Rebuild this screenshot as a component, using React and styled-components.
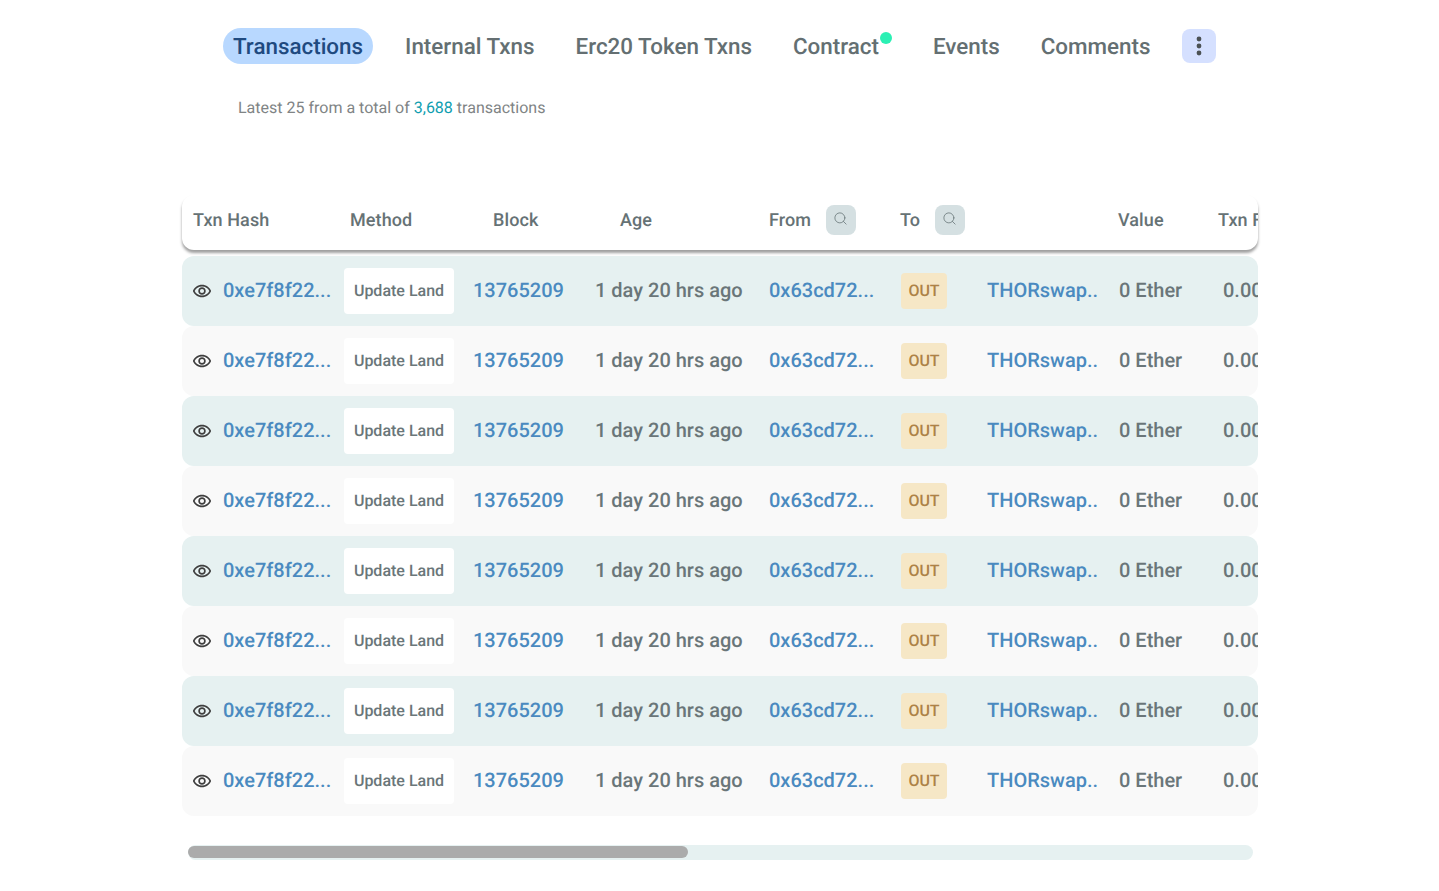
import React from 'react';
import styled, { createGlobalStyle } from 'styled-components';
import { MdOutlineRemoveRedEye } from 'react-icons/md';
import { Search } from 'lucide-react';

const GlobalStyle = createGlobalStyle`
  html, body { margin: 0; padding: 0; background: #fff; }
  body {
    font-family: Roboto, "Liberation Sans", sans-serif;
    text-rendering: geometricPrecision;
  }
`;

const Page = styled.div`
  width: 1439px;
  height: 891px;
  box-sizing: border-box;
  padding: 28px 181px 0 182px;
  overflow: hidden;
`;

const Tabs = styled.nav`
  display: flex;
  align-items: center;
  padding-left: 41px;
  height: 36px;
`;

const Tab = styled.div`
  position: relative;
  height: 36px;
  line-height: 38px;
  padding: 0 10px;
  margin-right: ${p => p.$gap}px;
  border-radius: 18px;
  font-size: 22.4px;
  font-weight: 500;
  white-space: nowrap;
  color: ${p => (p.$active ? '#1f4a80' : '#646f72')};
  background: ${p => (p.$active ? '#b8d8ff' : 'transparent')};
`;

const GreenDot = styled.span`
  position: absolute;
  top: 4px;
  right: -3px;
  width: 12px;
  height: 12px;
  border-radius: 50%;
  background: #2bf0b4;
`;

const MoreButton = styled.div`
  width: 34px;
  height: 34px;
  border-radius: 8px;
  background: #d5e0ff;
  display: flex;
  align-items: center;
  justify-content: center;
`;

const Summary = styled.p`
  margin: 0;
  padding: 34px 0 0 56px;
  height: 93px;
  box-sizing: border-box;
  font-size: 16px;
  line-height: 19px;
  color: #808485;
`;

const Count = styled.span`
  color: #0f9eb0;
`;

const HeaderBar = styled.div`
  width: 1076px;
  height: 55px;
  box-sizing: border-box;
  padding-bottom: 6px;
  margin-top: 38px;
  border-radius: 12px;
  background: #fff;
  box-shadow: 0 3px 3px rgba(0, 0, 0, 0.38);
  display: grid;
  grid-template-columns: 168px 143px 127px 149px 131px 218px 100px 100px;
  align-items: center;
  overflow: hidden;
  white-space: nowrap;
`;

const HeaderCell = styled.div`
  display: flex;
  align-items: center;
  padding-left: ${p => p.$indent || 0}px;
  gap: ${p => p.$gap || 0}px;
`;

const HeaderLabel = styled.span`
  margin-top: 2px;
  font-size: 18px;
  font-weight: 500;
  letter-spacing: 0.1px;
  color: #667275;
`;

const SearchButton = styled.div`
  width: 30px;
  height: 30px;
  box-sizing: border-box;
  padding: 0 2px 2px 0;
  border-radius: 8px;
  background: #d5e0e2;
  color: #6a777a;
  display: flex;
  align-items: center;
  justify-content: center;
`;

const Rows = styled.div`
  margin-top: 6px;
  width: 1076px;
`;

const Row = styled.div`
  height: 70px;
  border-radius: 12px;
  background: ${p => (p.$tinted ? '#e6f1f1' : '#f9f9f9')};
  display: grid;
  grid-template-columns: 162px 129px 122px 174px 132px 86px 132px 104px 100px;
  align-items: center;
  overflow: hidden;
  white-space: nowrap;
  font-size: 20px;
  font-weight: 500;
  color: #6a7679;
`;

const HashCell = styled.div`
  display: flex;
  align-items: center;
  gap: 11px;
  padding-left: 10px;
  color: #3f3f3f;
`;

const CellText = styled.span`
  margin-bottom: 2px;
`;

const BlueText = styled.span`
  margin-bottom: 2px;
  color: #4a8ac0;
`;

const MethodBadge = styled.div`
  width: 110px;
  height: 46px;
  border-radius: 4px;
  background: #fff;
  font-size: 16px;
  font-weight: 500;
  line-height: 46px;
  text-align: center;
  color: #6a7679;
`;

const OutBadge = styled.div`
  width: 46px;
  height: 36px;
  border-radius: 4px;
  background: #f6e7c6;
  color: #ad8247;
  font-size: 16px;
  font-weight: 500;
  line-height: 36px;
  text-align: center;
`;

const ScrollTrack = styled.div`
  margin: 29px 0 0 6px;
  width: 1065px;
  height: 15px;
  box-sizing: border-box;
  padding-top: 1px;
  border-radius: 8px;
  background: #e6f1f1;
`;

const ScrollThumb = styled.div`
  width: 500px;
  height: 12px;
  border-radius: 6px;
  background: #ababab;
`;

const tabs = [
  { label: 'Transactions', active: true, gap: 22 },
  { label: 'Internal Txns', gap: 21 },
  { label: 'Erc20 Token Txns', gap: 21 },
  { label: 'Contract', dot: true, gap: 34 },
  { label: 'Events', gap: 21 },
  { label: 'Comments', gap: 21 },
];

const App = () => (
  <Page>
    <GlobalStyle />
    <Tabs>
      {tabs.map(tab => (
        <Tab key={tab.label} $active={tab.active} $gap={tab.gap}>
          {tab.label}
          {tab.dot && <GreenDot />}
        </Tab>
      ))}
      <MoreButton>
        <svg width="6" height="20" viewBox="0 0 6 20" fill="#4b5154">
          <circle cx="3" cy="3" r="2.4" />
          <circle cx="3" cy="10" r="2.4" />
          <circle cx="3" cy="17" r="2.4" />
        </svg>
      </MoreButton>
    </Tabs>
    <Summary>
      Latest 25 from a total of <Count>3,688</Count> transactions
    </Summary>
    <HeaderBar>
      <HeaderCell $indent={11}><HeaderLabel>Txn Hash</HeaderLabel></HeaderCell>
      <HeaderCell><HeaderLabel>Method</HeaderLabel></HeaderCell>
      <HeaderCell><HeaderLabel>Block</HeaderLabel></HeaderCell>
      <HeaderCell><HeaderLabel>Age</HeaderLabel></HeaderCell>
      <HeaderCell $gap={15}>
        <HeaderLabel>From</HeaderLabel>
        <SearchButton><Search size={15} strokeWidth={1.3} /></SearchButton>
      </HeaderCell>
      <HeaderCell $gap={15}>
        <HeaderLabel>To</HeaderLabel>
        <SearchButton><Search size={15} strokeWidth={1.3} /></SearchButton>
      </HeaderCell>
      <HeaderCell><HeaderLabel>Value</HeaderLabel></HeaderCell>
      <HeaderCell><HeaderLabel>Txn Fee</HeaderLabel></HeaderCell>
    </HeaderBar>
    <Rows>
      {Array.from({ length: 8 }, (_, i) => (
        <Row key={i} $tinted={i % 2 === 0}>
          <HashCell>
            <MdOutlineRemoveRedEye size={20} />
            <BlueText>0xe7f8f22...</BlueText>
          </HashCell>
          <MethodBadge>Update Land</MethodBadge>
          <BlueText>13765209</BlueText>
          <CellText>1 day 20 hrs ago</CellText>
          <BlueText>0x63cd72...</BlueText>
          <OutBadge>OUT</OutBadge>
          <BlueText>THORswap..</BlueText>
          <CellText>0 Ether</CellText>
          <CellText>0.00</CellText>
        </Row>
      ))}
    </Rows>
    <ScrollTrack>
      <ScrollThumb />
    </ScrollTrack>
  </Page>
);

export default App;
